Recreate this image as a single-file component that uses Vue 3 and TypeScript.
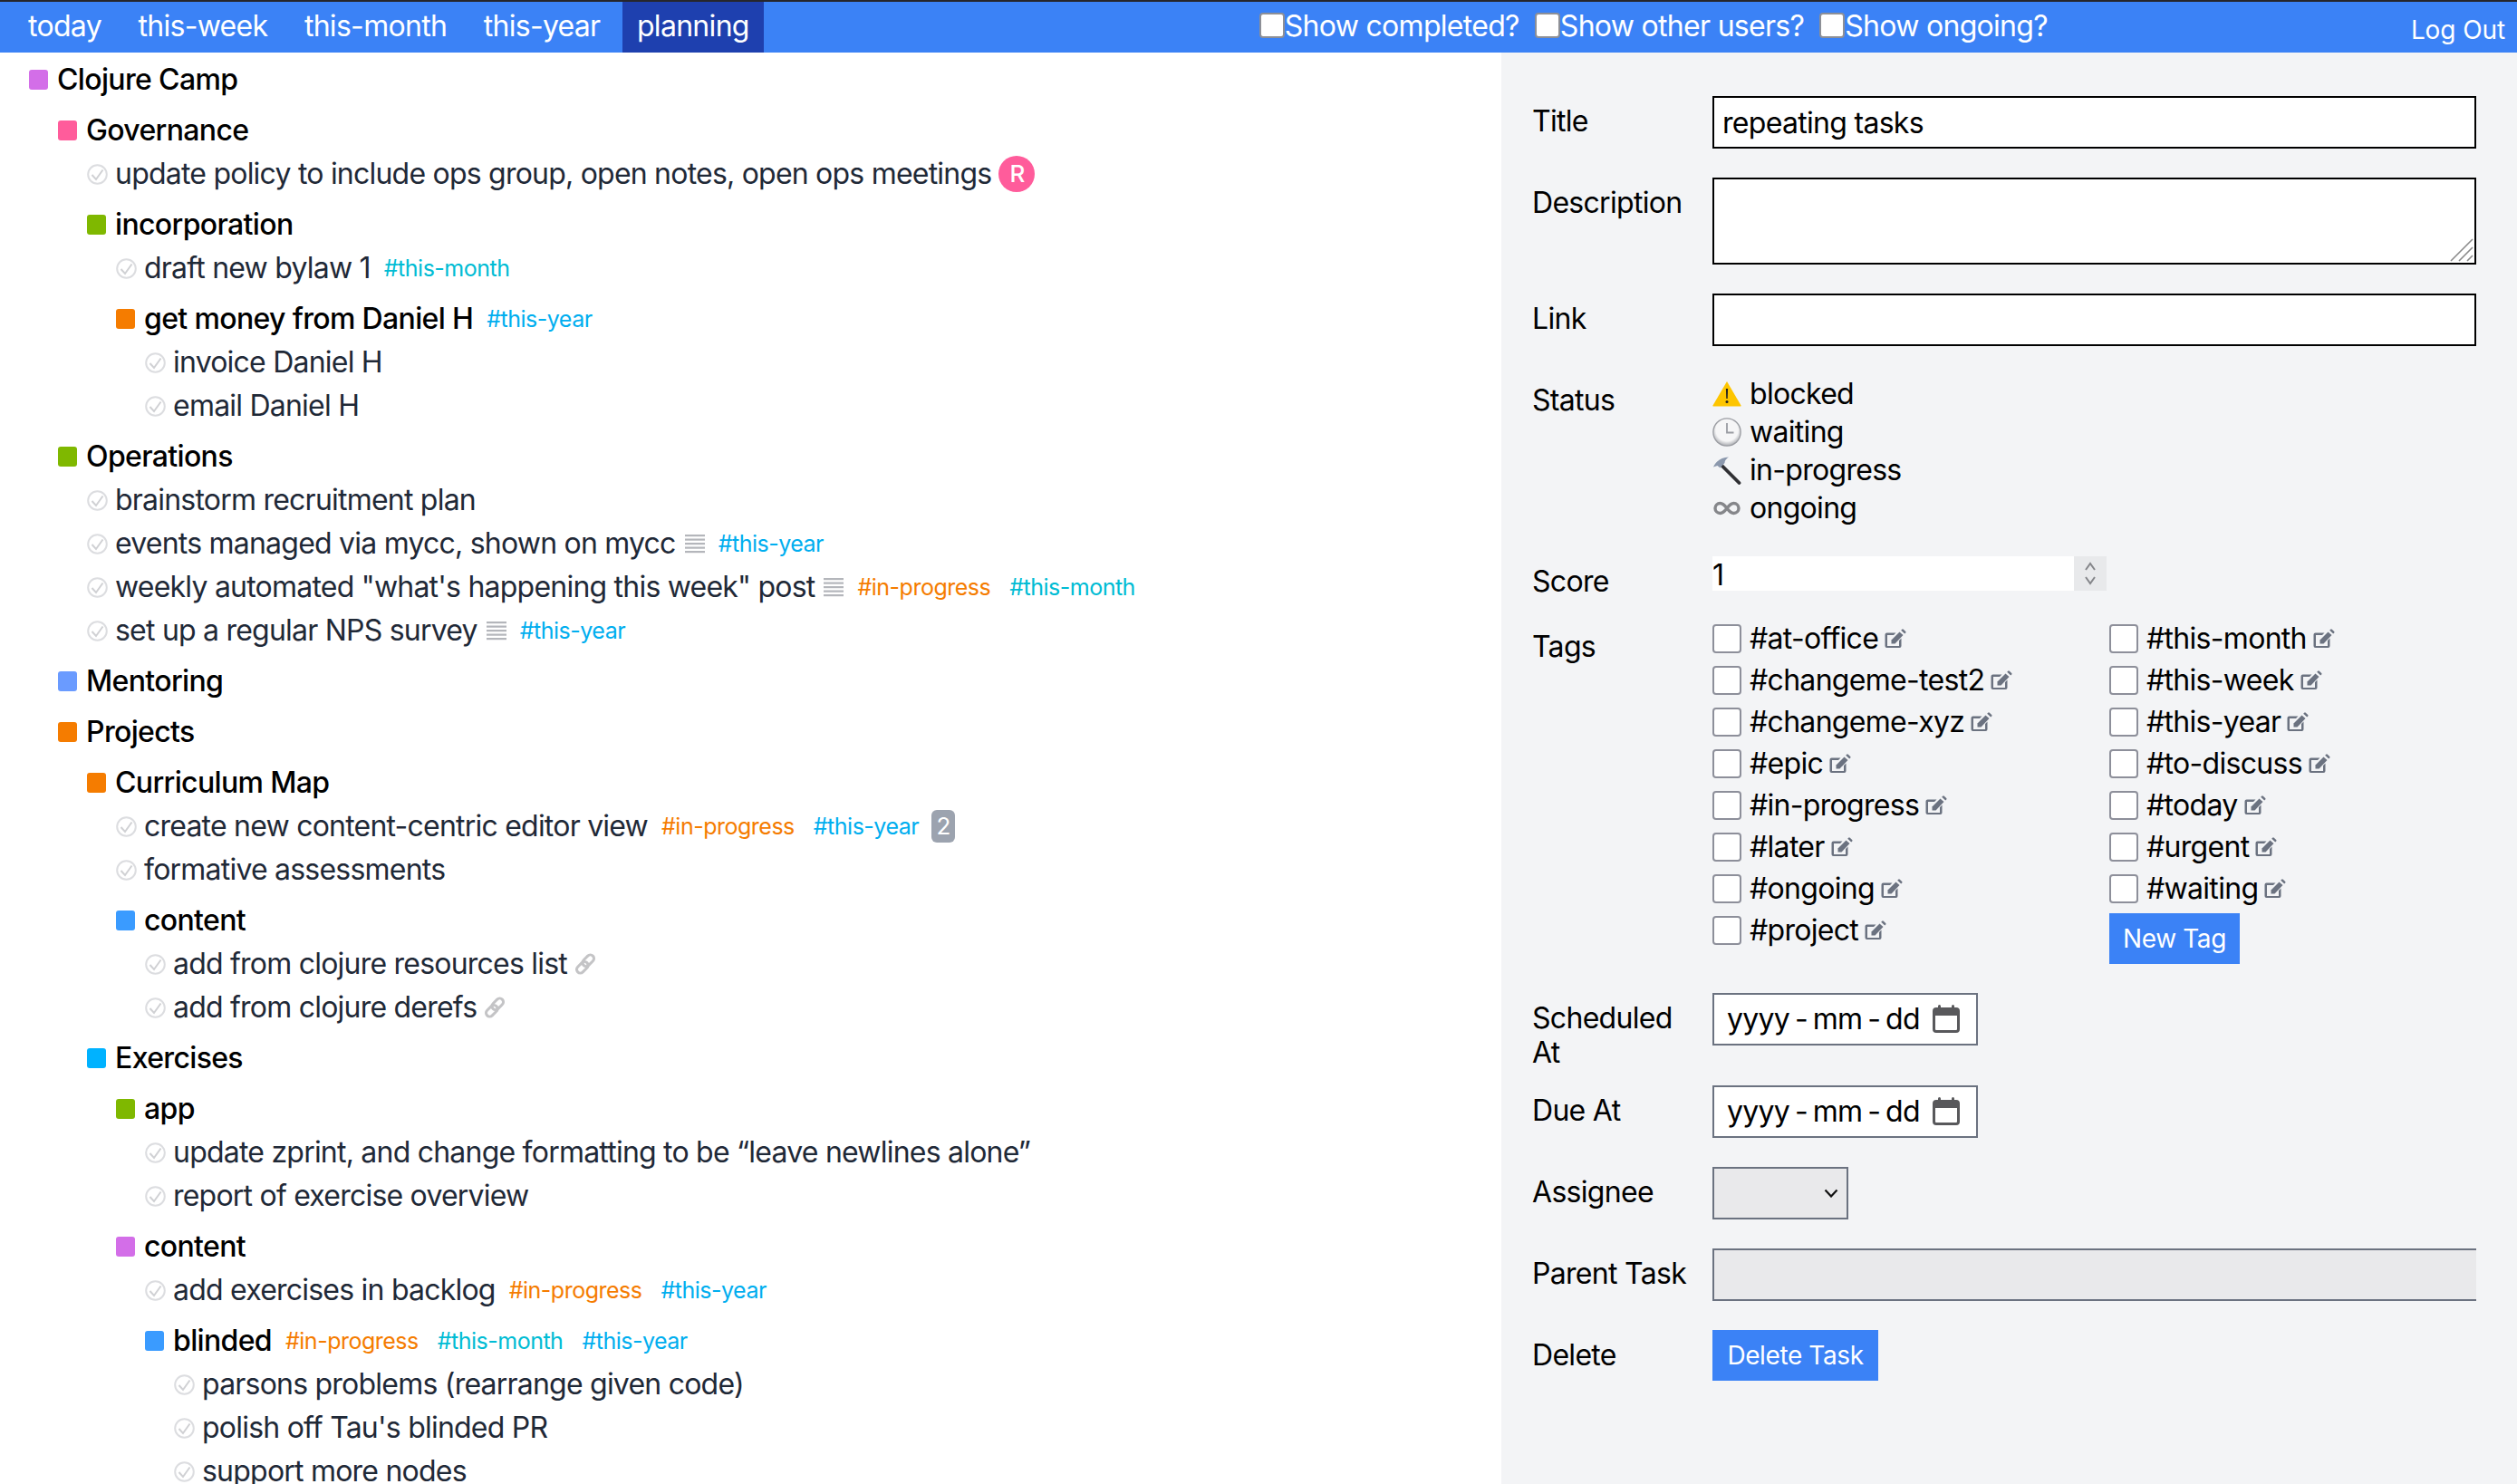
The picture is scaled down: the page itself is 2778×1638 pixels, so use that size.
<script setup lang="ts">
interface Row {
  kind: 'group' | 'task'
  depth: number
  text: string
  color?: string
  tags?: string[]
  notes?: boolean
  link?: boolean
  badge?: string
  avatar?: string
}

const purple = '#d36ee8'
const pink = '#ff5c9b'
const green = '#7fb800'
const orange = '#f57c00'
const periwinkle = '#6a9bff'
const blue = '#3a9bff'
const sky = '#00b2ff'

const rows: Row[] = [
  { kind: 'group', depth: 0, text: 'Clojure Camp', color: purple },
  { kind: 'group', depth: 1, text: 'Governance', color: pink },
  { kind: 'task', depth: 2, text: 'update policy to include ops group, open notes, open ops meetings', avatar: 'R' },
  { kind: 'group', depth: 2, text: 'incorporation', color: green },
  { kind: 'task', depth: 3, text: 'draft new bylaw 1', tags: ['#this-month'] },
  { kind: 'group', depth: 3, text: 'get money from Daniel H', color: orange, tags: ['#this-year'] },
  { kind: 'task', depth: 4, text: 'invoice Daniel H' },
  { kind: 'task', depth: 4, text: 'email Daniel H' },
  { kind: 'group', depth: 1, text: 'Operations', color: green },
  { kind: 'task', depth: 2, text: 'brainstorm recruitment plan' },
  { kind: 'task', depth: 2, text: 'events managed via mycc, shown on mycc', notes: true, tags: ['#this-year'] },
  { kind: 'task', depth: 2, text: 'weekly automated "what\'s happening this week" post', notes: true, tags: ['#in-progress', '#this-month'] },
  { kind: 'task', depth: 2, text: 'set up a regular NPS survey', notes: true, tags: ['#this-year'] },
  { kind: 'group', depth: 1, text: 'Mentoring', color: periwinkle },
  { kind: 'group', depth: 1, text: 'Projects', color: orange },
  { kind: 'group', depth: 2, text: 'Curriculum Map', color: orange },
  { kind: 'task', depth: 3, text: 'create new content-centric editor view', tags: ['#in-progress', '#this-year'], badge: '2' },
  { kind: 'task', depth: 3, text: 'formative assessments' },
  { kind: 'group', depth: 3, text: 'content', color: blue },
  { kind: 'task', depth: 4, text: 'add from clojure resources list', link: true },
  { kind: 'task', depth: 4, text: 'add from clojure derefs', link: true },
  { kind: 'group', depth: 2, text: 'Exercises', color: sky },
  { kind: 'group', depth: 3, text: 'app', color: green },
  { kind: 'task', depth: 4, text: 'update zprint, and change formatting to be “leave newlines alone”' },
  { kind: 'task', depth: 4, text: 'report of exercise overview' },
  { kind: 'group', depth: 3, text: 'content', color: purple },
  { kind: 'task', depth: 4, text: 'add exercises in backlog', tags: ['#in-progress', '#this-year'] },
  { kind: 'group', depth: 4, text: 'blinded', color: blue, tags: ['#in-progress', '#this-month', '#this-year'] },
  { kind: 'task', depth: 5, text: 'parsons problems (rearrange given code)' },
  { kind: 'task', depth: 5, text: "polish off Tau's blinded PR" },
  { kind: 'task', depth: 5, text: 'support more nodes' },
]

const tagColors: Record<string, string> = {
  '#this-month': '#00bcd4',
  '#this-year': '#00aeef',
  '#in-progress': '#f57c00',
}

const navItems = ['today', 'this-week', 'this-month', 'this-year', 'planning']
const toggles = ['Show completed?', 'Show other users?', 'Show ongoing?']
const statuses = ['blocked', 'waiting', 'in-progress', 'ongoing']
const tagOptions = [
  '#at-office', '#changeme-test2', '#changeme-xyz', '#epic', '#in-progress', '#later', '#ongoing', '#project',
  '#this-month', '#this-week', '#this-year', '#to-discuss', '#today', '#urgent', '#waiting',
]
</script>

<template>
  <div class="page">
    <nav class="top-nav">
      <div class="nav-tabs">
        <a v-for="item in navItems" :key="item" class="nav-tab" :class="{ active: item === 'planning' }">{{ item }}</a>
      </div>
      <div class="nav-toggles">
        <label v-for="t in toggles" :key="t" class="nav-toggle">
          <span class="nav-check"></span>{{ t }}
        </label>
      </div>
      <a class="logout">Log Out</a>
    </nav>

    <div class="columns">
      <main class="tree">
        <div
          v-for="(row, i) in rows"
          :key="i"
          class="row"
          :class="row.kind"
          :style="{ paddingLeft: 32 + row.depth * 32 + 'px' }"
        >
          <span v-if="row.kind === 'group'" class="marker" :style="{ background: row.color }"></span>
          <svg v-else class="check" viewBox="0 0 23 23" fill="none">
            <circle cx="11.500" cy="11.500" r="10.300" stroke="#dcdde0" stroke-width="2" />
            <path d="M5.500 12l4.500 5L17.500 6.500" stroke="#d0d1d4" stroke-width="2" />
          </svg>
          <span class="row-text">{{ row.text }}</span>
          <svg v-if="row.notes" class="notes" viewBox="0 0 22 22" fill="#b4b6bb">
            <rect x="0" y="1" width="22" height="2.200" />
            <rect x="0" y="5.500" width="22" height="2.200" />
            <rect x="0" y="10" width="22" height="2.200" />
            <rect x="0" y="14.500" width="22" height="2.200" />
            <rect x="0" y="19" width="22" height="2.200" />
          </svg>
          <svg v-if="row.link" class="link" viewBox="0 0 24 24" fill="none" stroke="#c4c4c6" stroke-width="3">
            <rect x="11.200" y="1" width="8" height="14.500" rx="4" transform="rotate(45 15.200 8.300)" />
            <rect x="4.800" y="8.500" width="8" height="14.500" rx="4" transform="rotate(45 8.800 15.700)" />
          </svg>
          <span v-for="tag in row.tags" :key="tag" class="tag" :style="{ color: tagColors[tag] }">{{ tag }}</span>
          <span v-if="row.badge" class="badge">{{ row.badge }}</span>
          <span v-if="row.avatar" class="avatar">{{ row.avatar }}</span>
        </div>
      </main>

      <aside class="panel">
        <div class="field">
          <label class="field-label">Title</label>
          <input class="text-input" type="text" value="repeating tasks">
        </div>
        <div class="field">
          <label class="field-label">Description</label>
          <div class="text-area">
            <svg class="grip" viewBox="0 0 26 26" stroke="#8a8a8a" stroke-width="1.600">
              <path d="M1 25L25 1M10 25L25 10M19 25L25 19" />
            </svg>
          </div>
        </div>
        <div class="field">
          <label class="field-label">Link</label>
          <input class="text-input" type="text">
        </div>
        <div class="field">
          <label class="field-label">Status</label>
          <div class="status-list">
            <div v-for="s in statuses" :key="s" class="status-row">
              <svg v-if="s === 'blocked'" class="status-icon" viewBox="0 0 32 32">
                <path d="M16 2L31.500 28.500a.6.6 0 0 1-.5 .9H1a.6.6 0 0 1-.5-.9z" fill="#fdc500" />
                <path d="M14.900 10h2.200l-.4 11h-1.400z" fill="#222" />
                <circle cx="16" cy="24.600" r="1.500" fill="#222" />
              </svg>
              <svg v-else-if="s === 'waiting'" class="status-icon" viewBox="0 0 32 32">
                <defs>
                  <radialGradient id="clockFace" cx="50%" cy="42%" r="60%">
                    <stop offset="70%" stop-color="#f6f6f7" />
                    <stop offset="100%" stop-color="#a9abb0" />
                  </radialGradient>
                </defs>
                <circle cx="16" cy="16" r="15.800" fill="#9a9ca2" />
                <circle cx="16" cy="16" r="14.500" fill="url(#clockFace)" />
                <path d="M16 6v10.500h7.500" fill="none" stroke="#9a9ca2" stroke-width="1.800" />
              </svg>
              <svg v-else-if="s === 'in-progress'" class="status-icon" viewBox="0 0 32 32">
                <path d="M10.500 11L29.500 30" stroke="#2f2f33" stroke-width="3.800" stroke-linecap="round" />
                <path d="M1 12.500C4 6 10 1.500 18 1.500c-3 2-4.500 4-4.500 6.500l-5 5.500-3-2.500z" fill="#8b98ad" />
              </svg>
              <svg v-else class="status-icon" viewBox="0 0 32 32" fill="none" stroke="#85868a" stroke-width="3.400">
                <path d="M16 16c-2.800-3.800-5-5.500-7.500-5.500a5.500 5.500 0 0 0 0 11C11 21.500 13.200 19.800 16 16c2.800-3.800 5-5.500 7.500-5.500a5.500 5.500 0 0 1 0 11C21 21.500 18.800 19.800 16 16z" />
              </svg>
              <span>{{ s }}</span>
            </div>
          </div>
        </div>
        <div class="field field-score">
          <label class="field-label">Score</label>
          <div class="score">
            <span class="score-value">1</span>
            <span class="spinner">
              <svg viewBox="0 0 16 30" fill="none" stroke="#85868a" stroke-width="2">
                <path d="M3 11l5-7 5 7M3 19l5 7 5-7" />
              </svg>
            </span>
          </div>
        </div>
        <div class="field">
          <label class="field-label">Tags</label>
          <div class="tag-grid">
            <div v-for="t in tagOptions" :key="t" class="tag-option">
              <span class="tag-check"></span>
              <span>{{ t }}</span>
              <svg class="edit" viewBox="0 0 24 22" fill="#6b7280">
                <path d="M2.500 4.500H12.500L10 7H3V19H16V13l2.500-2.500V19a2 2 0 0 1-2 2H2.500a2 2 0 0 1-2-2V6.500a2 2 0 0 1 2-2z" />
                <path d="M16.500 3.500l4 3.600L11.500 16.500H7.500v-4z" />
                <path d="M18.200 1.700l1-1a1.200 1.200 0 0 1 1.600 0l2.400 2.200a1.200 1.200 0 0 1 0 1.600l-1 1z" />
              </svg>
            </div>
            <button class="blue-btn new-tag">New Tag</button>
          </div>
        </div>
        <div class="field field-scheduled">
          <label class="field-label">Scheduled At</label>
          <div class="date-input">
            <span>yyyy - mm - dd</span>
            <svg class="calendar" viewBox="0 0 32 32" fill="#58585b">
              <path d="M5 3h22a4 4 0 0 1 4 4v20a4 4 0 0 1-4 4H5a4 4 0 0 1-4-4V7a4 4 0 0 1 4-4zm-1 9v15a1 1 0 0 0 1 1h22a1 1 0 0 0 1-1V12z" />
              <rect x="7" y="0" width="3" height="6" rx="1.500" />
              <rect x="22" y="0" width="3" height="6" rx="1.500" />
            </svg>
          </div>
        </div>
        <div class="field">
          <label class="field-label">Due At</label>
          <div class="date-input">
            <span>yyyy - mm - dd</span>
            <svg class="calendar" viewBox="0 0 32 32" fill="#58585b">
              <path d="M5 3h22a4 4 0 0 1 4 4v20a4 4 0 0 1-4 4H5a4 4 0 0 1-4-4V7a4 4 0 0 1 4-4zm-1 9v15a1 1 0 0 0 1 1h22a1 1 0 0 0 1-1V12z" />
              <rect x="7" y="0" width="3" height="6" rx="1.500" />
              <rect x="22" y="0" width="3" height="6" rx="1.500" />
            </svg>
          </div>
        </div>
        <div class="field">
          <label class="field-label">Assignee</label>
          <div class="select-box">
            <svg viewBox="0 0 16 10" fill="none" stroke="#111" stroke-width="2.200">
              <path d="M1.500 1.500L8 8.500l6.500-7" />
            </svg>
          </div>
        </div>
        <div class="field">
          <label class="field-label">Parent Task</label>
          <div class="parent-box"></div>
        </div>
        <div class="field">
          <label class="field-label">Delete</label>
          <button class="blue-btn delete-btn">Delete Task</button>
        </div>
      </aside>
    </div>
  </div>
</template>

<style>
html,
body {
  margin: 0;
  background: #fff;
}
</style>

<style scoped>
.page {
  width: 2778px;
  height: 1638px;
  overflow: hidden;
  display: flex;
  flex-direction: column;
  font-family: Inter, "Liberation Sans", sans-serif;
  font-size: 32px;
  line-height: 38px;
  letter-spacing: -0.7px;
  color: #000;
}

/* top bar */
.top-nav {
  height: 58px;
  box-sizing: border-box;
  border-top: 2px solid #26262c;
  background: #3b82f6;
  color: #fff;
  display: flex;
  align-items: stretch;
  position: relative;
  flex-shrink: 0;
}

.nav-tabs {
  display: flex;
  gap: 8.5px;
  padding-left: 15px;
}

.nav-tab {
  padding: 0 16px 3px;
  display: flex;
  align-items: center;
}

.nav-tab.active {
  background: #1e40af;
}

.nav-toggles {
  display: flex;
  gap: 17px;
  align-items: center;
  margin-left: 547px;
  padding-bottom: 3px;
}

.nav-toggle {
  display: flex;
  align-items: center;
}

.nav-check {
  width: 24px;
  height: 24px;
  border: 2px solid #8d8f96;
  border-radius: 4px;
  background: #fff;
  box-sizing: content-box;
  margin-top: -2px;
}

.logout {
  margin-left: auto;
  padding: 6px 13px 0 0;
  font-size: 28px;
  letter-spacing: -0.1px;
  display: flex;
  align-items: center;
}

/* task tree */
.columns {
  flex: 1;
  display: flex;
  min-height: 0;
}

.tree {
  flex: 1;
  padding-top: 6px;
  min-width: 0;
}

.row {
  height: 48px;
  display: flex;
  align-items: center;
  white-space: nowrap;
  color: #1f2937;
  letter-spacing: -0.78px;
}

.row.group {
  margin-top: 8px;
  color: #000;
  font-weight: 500;
  letter-spacing: -0.65px;
}

.row.group:first-child {
  margin-top: 0;
}

.marker {
  width: 21px;
  height: 22px;
  border-radius: 3px;
  margin-right: 10px;
  flex-shrink: 0;
}

.check {
  width: 23px;
  height: 23px;
  margin-right: 8px;
  flex-shrink: 0;
}

.notes {
  width: 22px;
  height: 22px;
  margin-left: 10px;
}

.link {
  width: 24px;
  height: 24px;
  margin-left: 8px;
}

.tag {
  font-size: 25px;
  font-weight: 400;
  letter-spacing: -0.5px;
  margin-left: 15px;
  margin-right: 6px;
}

.badge {
  width: 26px;
  height: 36px;
  background: #9ca3af;
  color: #fff;
  border-radius: 6px;
  font-size: 26px;
  display: flex;
  align-items: center;
  justify-content: center;
  margin-left: 8px;
}

.avatar {
  width: 40px;
  height: 40px;
  border-radius: 50%;
  background: #ff5c9b;
  color: #fff;
  font-size: 26px;
  font-weight: 500;
  display: flex;
  align-items: center;
  justify-content: center;
  margin-left: 8px;
}

/* side panel */
.panel {
  width: 1121px;
  flex-shrink: 0;
  box-sizing: border-box;
  background: #f3f4f6;
  padding: 48px 45px 0 34px;
  display: flex;
  flex-direction: column;
  gap: 32px;
}

.field {
  display: flex;
  align-items: flex-start;
}

.field-score {
  height: 40px;
}

.field-scheduled {
  height: 70px;
}

.field-label {
  width: 199px;
  flex-shrink: 0;
  padding-top: 9px;
  padding-right: 20px;
  box-sizing: border-box;
}

.text-input {
  flex: 1;
  min-width: 0;
  height: 58px;
  box-sizing: border-box;
  border: 2px solid #000;
  border-radius: 0;
  background: #fff;
  padding: 0 9px;
  font: inherit;
  letter-spacing: inherit;
  color: #000;
  outline: none;
}

.text-area {
  flex: 1;
  height: 96px;
  box-sizing: border-box;
  border: 2px solid #000;
  background: #fff;
  position: relative;
}

.grip {
  position: absolute;
  right: 1px;
  bottom: 1px;
  width: 26px;
  height: 26px;
}

.status-list {
  display: flex;
  flex-direction: column;
}

.status-row {
  height: 42px;
  display: flex;
  align-items: center;
  gap: 9px;
}

.status-icon {
  width: 32px;
  height: 32px;
  flex-shrink: 0;
}

.score {
  width: 435px;
  height: 38px;
  background: #fff;
  display: flex;
  justify-content: space-between;
}

.score-value {
  padding-top: 2px;
}

.spinner {
  width: 36px;
  background: #e8e9eb;
  display: flex;
  align-items: center;
  justify-content: center;
}

.spinner svg {
  width: 16px;
  height: 30px;
}

.tag-grid {
  display: grid;
  grid-template-rows: repeat(7, 46px) 60px;
  grid-auto-flow: column;
  grid-template-columns: 438px 1fr;
  flex: 1;
  margin-top: -4px;
}

.tag-option {
  display: flex;
  align-items: center;
  gap: 9px;
  height: 46px;
}

.tag-check {
  width: 32px;
  height: 32px;
  box-sizing: border-box;
  border: 2px solid #8d8f9a;
  border-radius: 4px;
  background: #fff;
  flex-shrink: 0;
}

.edit {
  width: 24px;
  height: 22px;
  margin-left: -2px;
  flex-shrink: 0;
}

.blue-btn {
  background: #3b82f6;
  color: #fff;
  border: none;
  font: inherit;
  font-size: 28px;
  letter-spacing: -0.4px;
  padding: 0;
}

.new-tag {
  width: 144px;
  height: 56px;
  margin-top: 4px;
}

.date-input {
  width: 293px;
  height: 58px;
  box-sizing: border-box;
  border: 2px solid #6b7280;
  background: #fff;
  display: flex;
  align-items: center;
  justify-content: space-between;
  padding: 0 17px 0 14px;
  white-space: nowrap;
  word-spacing: -2.5px;
}

.calendar {
  width: 32px;
  height: 32px;
  flex-shrink: 0;
}

.select-box {
  width: 150px;
  height: 58px;
  box-sizing: border-box;
  border: 2px solid #6b7280;
  background: #e9e9eb;
  display: flex;
  align-items: center;
  justify-content: flex-end;
  padding-right: 9px;
}

.select-box svg {
  width: 16px;
  height: 10px;
}

.parent-box {
  flex: 1;
  height: 58px;
  box-sizing: border-box;
  border: 2px solid #6b7280;
  border-right: none;
  background: #e9e9eb;
}

.delete-btn {
  width: 183px;
  height: 56px;
}
</style>
